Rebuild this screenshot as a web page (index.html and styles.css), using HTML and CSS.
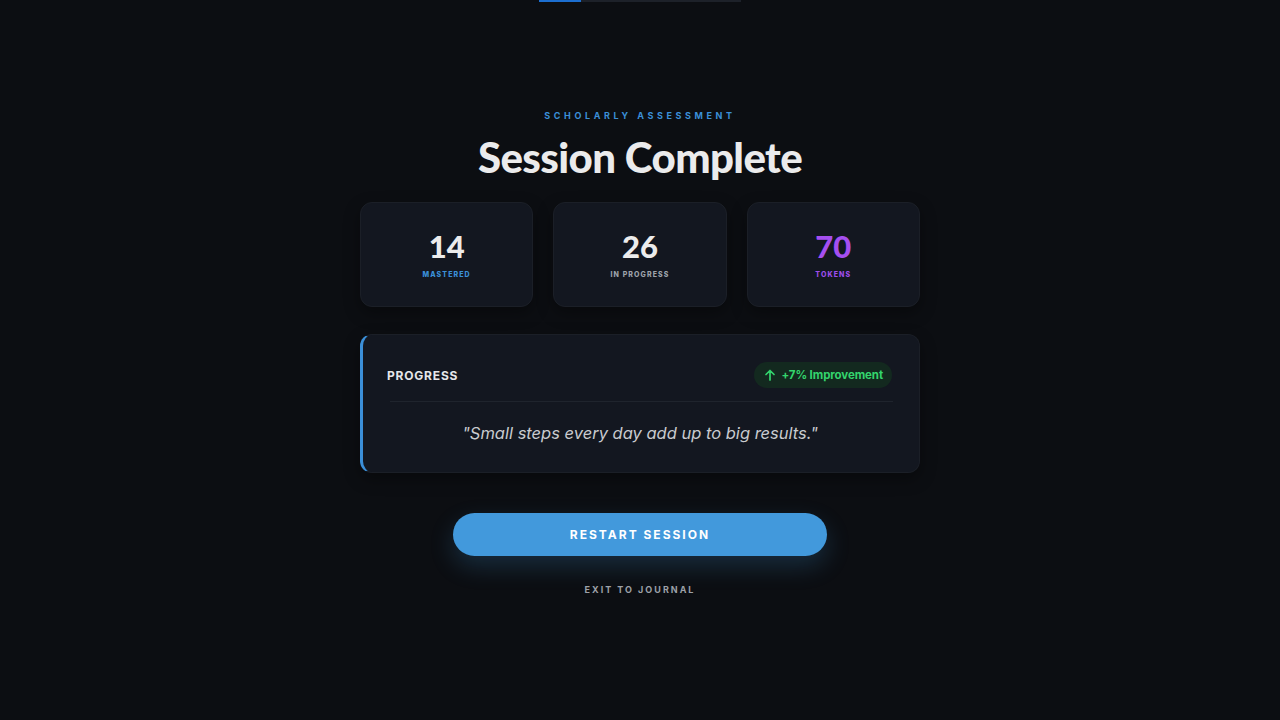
FILE: index.html
```html
<!DOCTYPE html>
<html lang="en">
<head>
  <meta charset="UTF-8">
  <meta name="viewport" content="width=device-width, initial-scale=1.0">
  <title>Session Complete</title>
  <link rel="stylesheet" href="styles.css">
</head>
<body>
  <div class="top-progress"><div class="top-progress-fill"></div></div>

  <main class="summary">
    <div class="eyebrow">Scholarly Assessment</div>
    <h1>Session Complete</h1>

    <div class="stats">
      <div class="stat">
        <div class="stat-value">14</div>
        <div class="stat-label mastered">Mastered</div>
      </div>
      <div class="stat">
        <div class="stat-value">26</div>
        <div class="stat-label">In Progress</div>
      </div>
      <div class="stat">
        <div class="stat-value tokens">70</div>
        <div class="stat-label tokens">Tokens</div>
      </div>
    </div>

    <div class="progress-card">
      <div class="progress-head">
        <span class="progress-title">Progress</span>
        <span class="badge">
          <svg width="12" height="12" viewBox="0 0 12 12" fill="none" stroke="currentColor" stroke-width="1.7" stroke-linecap="round" stroke-linejoin="round"><path d="M6 11V1.5M2 5.5l4-4 4 4"/></svg>
          +7% Improvement
        </span>
      </div>
      <p class="quote">"Small steps every day add up to big results."</p>
    </div>

    <button class="restart">Restart Session</button>
    <a class="exit" href="#">Exit to Journal</a>
  </main>
</body>
</html>
```

FILE: styles.css
```css
body {
  margin: 0;
  background-color: #0c0e12;
  font-family: Inter, "Noto Sans", sans-serif;
  color: #e6e7ea;
}
.top-progress {
  width: 202px;
  height: 2px;
  margin: 0 auto;
  background-color: #1d2129;
}
.top-progress-fill {
  width: 42px;
  height: 100%;
  background-color: #1c6ed0;
}
.summary {
  width: 560px;
  margin: 0 auto;
  padding-top: 108px;
  display: flex;
  flex-direction: column;
  align-items: center;
}
.eyebrow {
  font-size: 9px;
  font-weight: 700;
  letter-spacing: 3.6px;
  text-transform: uppercase;
  color: #3b8fd8;
  line-height: 12px;
}
h1 {
  font-family: Lato, "Noto Sans", sans-serif;
  font-size: 42px;
  font-weight: 900;
  letter-spacing: -0.6px;
  color: #ebebec;
  margin: 12px 0 22px;
  line-height: 46px;
}
.stats {
  display: grid;
  grid-template-columns: repeat(3, 1fr);
  gap: 20px;
  width: 100%;
}
.stat {
  height: 103px;
  background-color: #131720;
  border: 1px solid #1b1f27;
  border-radius: 12px;
  box-shadow: 0 6px 16px rgba(0, 0, 0, 0.35);
  display: flex;
  flex-direction: column;
  align-items: center;
  justify-content: center;
}
.stat-value {
  font-family: Lato, "Noto Sans", sans-serif;
  font-size: 31px;
  font-weight: 900;
  line-height: 34px;
  color: #ececec;
  margin-top: -2px;
}
.stat-value.tokens {
  color: #a54ff0;
}
.stat-label {
  font-size: 7px;
  font-weight: 800;
  letter-spacing: 1.1px;
  text-transform: uppercase;
  color: #9ea3ab;
  margin-top: 7px;
}
.stat-label.mastered {
  color: #3b8fd8;
}
.stat-label.tokens {
  color: #9d4deb;
}
.progress-card {
  width: 100%;
  box-sizing: border-box;
  margin-top: 27px;
  padding: 0 26px 0 24px;
  background-color: #131720;
  border: 1px solid #1b1f27;
  border-left: 3px solid #3b8fd8;
  border-radius: 12px;
  box-shadow: 0 6px 16px rgba(0, 0, 0, 0.35);
}
.progress-head {
  display: flex;
  justify-content: space-between;
  align-items: center;
  padding: 27px 0 13px;
  border-bottom: 1px solid #1f242d;
  margin-left: 3px;
}
.progress-title {
  font-size: 12px;
  font-weight: 700;
  letter-spacing: 0.8px;
  text-transform: uppercase;
  color: #e6e7ea;
  margin-left: -3px;
}
.badge {
  display: flex;
  align-items: center;
  gap: 5px;
  height: 26px;
  padding: 0 9px 0 10px;
  border-radius: 13px;
  background-color: #13291f;
  color: #33d46d;
  font-size: 11.5px;
  font-weight: 700;
  letter-spacing: -0.1px;
  margin-right: 1px;
}
.quote {
  margin: 0;
  padding: 19px 0 27px;
  text-align: center;
  font-size: 16.5px;
  font-style: italic;
  color: #c9cbcf;
  line-height: 24px;
}
.restart {
  margin-top: 40px;
  width: 374px;
  height: 43px;
  border: none;
  border-radius: 22px;
  background-color: #4299dc;
  color: #ffffff;
  font-family: Inter, "Noto Sans", sans-serif;
  font-size: 12px;
  font-weight: 700;
  letter-spacing: 2px;
  text-transform: uppercase;
  box-shadow: 0 10px 24px rgba(66, 153, 220, 0.22);
  cursor: pointer;
}
.exit {
  margin-top: 28px;
  font-size: 9px;
  font-weight: 700;
  letter-spacing: 2px;
  text-transform: uppercase;
  color: #9da1a8;
  text-decoration: none;
}
```
